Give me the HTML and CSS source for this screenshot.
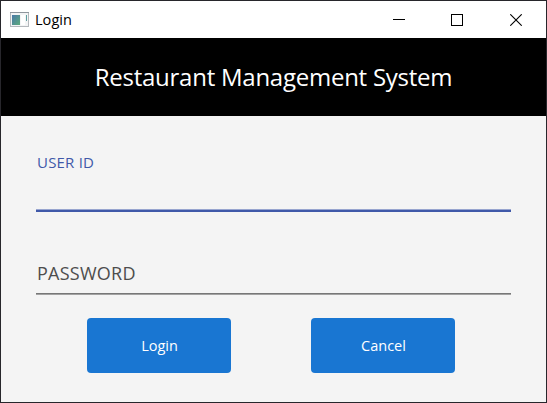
FILE: index.html
```html
<!DOCTYPE html>
<html lang="en">
<head>
<meta charset="utf-8">
<title>Login</title>
<link rel="stylesheet" href="styles.css">
</head>
<body>
<div class="window">
  <div class="titlebar">
    <svg class="app-icon" width="19" height="15" viewBox="0 0 19 15">
      <defs><linearGradient id="g" x1="0" y1="0" x2="1" y2="1"><stop offset="0" stop-color="#4a78a8"/><stop offset="1" stop-color="#5cab7c"/></linearGradient></defs>
      <rect x=".5" y=".5" width="18" height="14" fill="#f3f4f5" stroke="#b4b8bc"/>
      <path d="M0 .5h19" stroke="#8f969d"/>
      <rect x="2" y="3" width="8" height="10" fill="url(#g)"/>
      <rect x="11" y="3" width="4" height="10" fill="#fff"/>
      <rect x="16" y="3" width="1" height="6" fill="#5f9fa0"/>
    </svg>
    <span class="caption">Login</span>
    <div class="controls">
      <svg width="12" height="12" viewBox="0 0 12 12"><path d="M0 5.5h12" stroke="#000"/></svg>
      <svg width="12" height="12" viewBox="0 0 12 12"><rect x=".5" y=".5" width="11" height="11" fill="none" stroke="#000"/></svg>
      <svg width="12" height="12" viewBox="0 0 12 12"><path d="M.3.3l11.4 11.4M11.7.3L.3 11.7" stroke="#000" stroke-width="1.1"/></svg>
    </div>
  </div>
  <header class="banner"><h1 class="heading">Restaurant Management System</h1></header>
  <main class="form">
    <div class="field user"><label class="label">USER ID</label></div>
    <div class="field password"><label class="label">PASSWORD</label></div>
    <div class="actions">
      <button class="btn"><span>Login</span></button>
      <button class="btn"><span>Cancel</span></button>
    </div>
  </main>
</div>
</body>
</html>
```
FILE: styles.css
```css
* { box-sizing: border-box; }
body {
  margin: 0;
  font-family: "Open Sans", "Noto Sans", sans-serif;
}
.window {
  width: 547px;
  height: 403px;
  border: 1px solid #27262b;
  background: #f4f4f4;
  overflow: hidden;
}
.titlebar {
  display: flex;
  align-items: center;
  height: 37px;
  padding-left: 9px;
  background: #fff;
}
.app-icon { margin-top: -1px; }
.caption {
  margin-left: 6px;
  font-size: 14.5px;
  line-height: 20px;
  letter-spacing: 0.05px;
}
.controls {
  display: flex;
  gap: 46px;
  margin-left: auto;
  padding-right: 25px;
}
.controls svg { display: block; }
.controls svg:last-child { margin-left: 1px; margin-right: -1px; }
.banner {
  height: 78px;
  background: #000;
  color: #fff;
  text-align: center;
}
.heading {
  margin: 0;
  font-size: 24px;
  font-weight: 400;
  line-height: 78px;
  letter-spacing: -0.25px;
  white-space: nowrap;
}
.form { padding: 0 35px; }
.field {
  padding-left: 1px;
  white-space: nowrap;
}
.label { display: block; }
.user {
  height: 96px;
  padding-top: 36px;
  color: #4059a9;
  font-size: 15px;
  line-height: 20px;
  letter-spacing: 0.2px;
  border-bottom: 2px solid #4059a9;
  box-shadow: inset 0 -1px #98a5cf;
}
.password {
  height: 83px;
  padding-top: 49px;
  color: #4d4d4d;
  font-size: 18px;
  line-height: 24px;
  letter-spacing: 0.25px;
  border-bottom: 1px solid #a2a2a2;
  box-shadow: inset 0 -1px #777;
}
.actions {
  display: flex;
  gap: 80px;
  padding: 23px 0 0 51px;
}
.btn {
  width: 144px;
  height: 55px;
  padding: 0;
  border: 0;
  border-radius: 4px;
  background: #1976d2;
  color: #fff;
  font: inherit;
  font-size: 14.5px;
}
.btn span { padding-left: 1px; }
```
